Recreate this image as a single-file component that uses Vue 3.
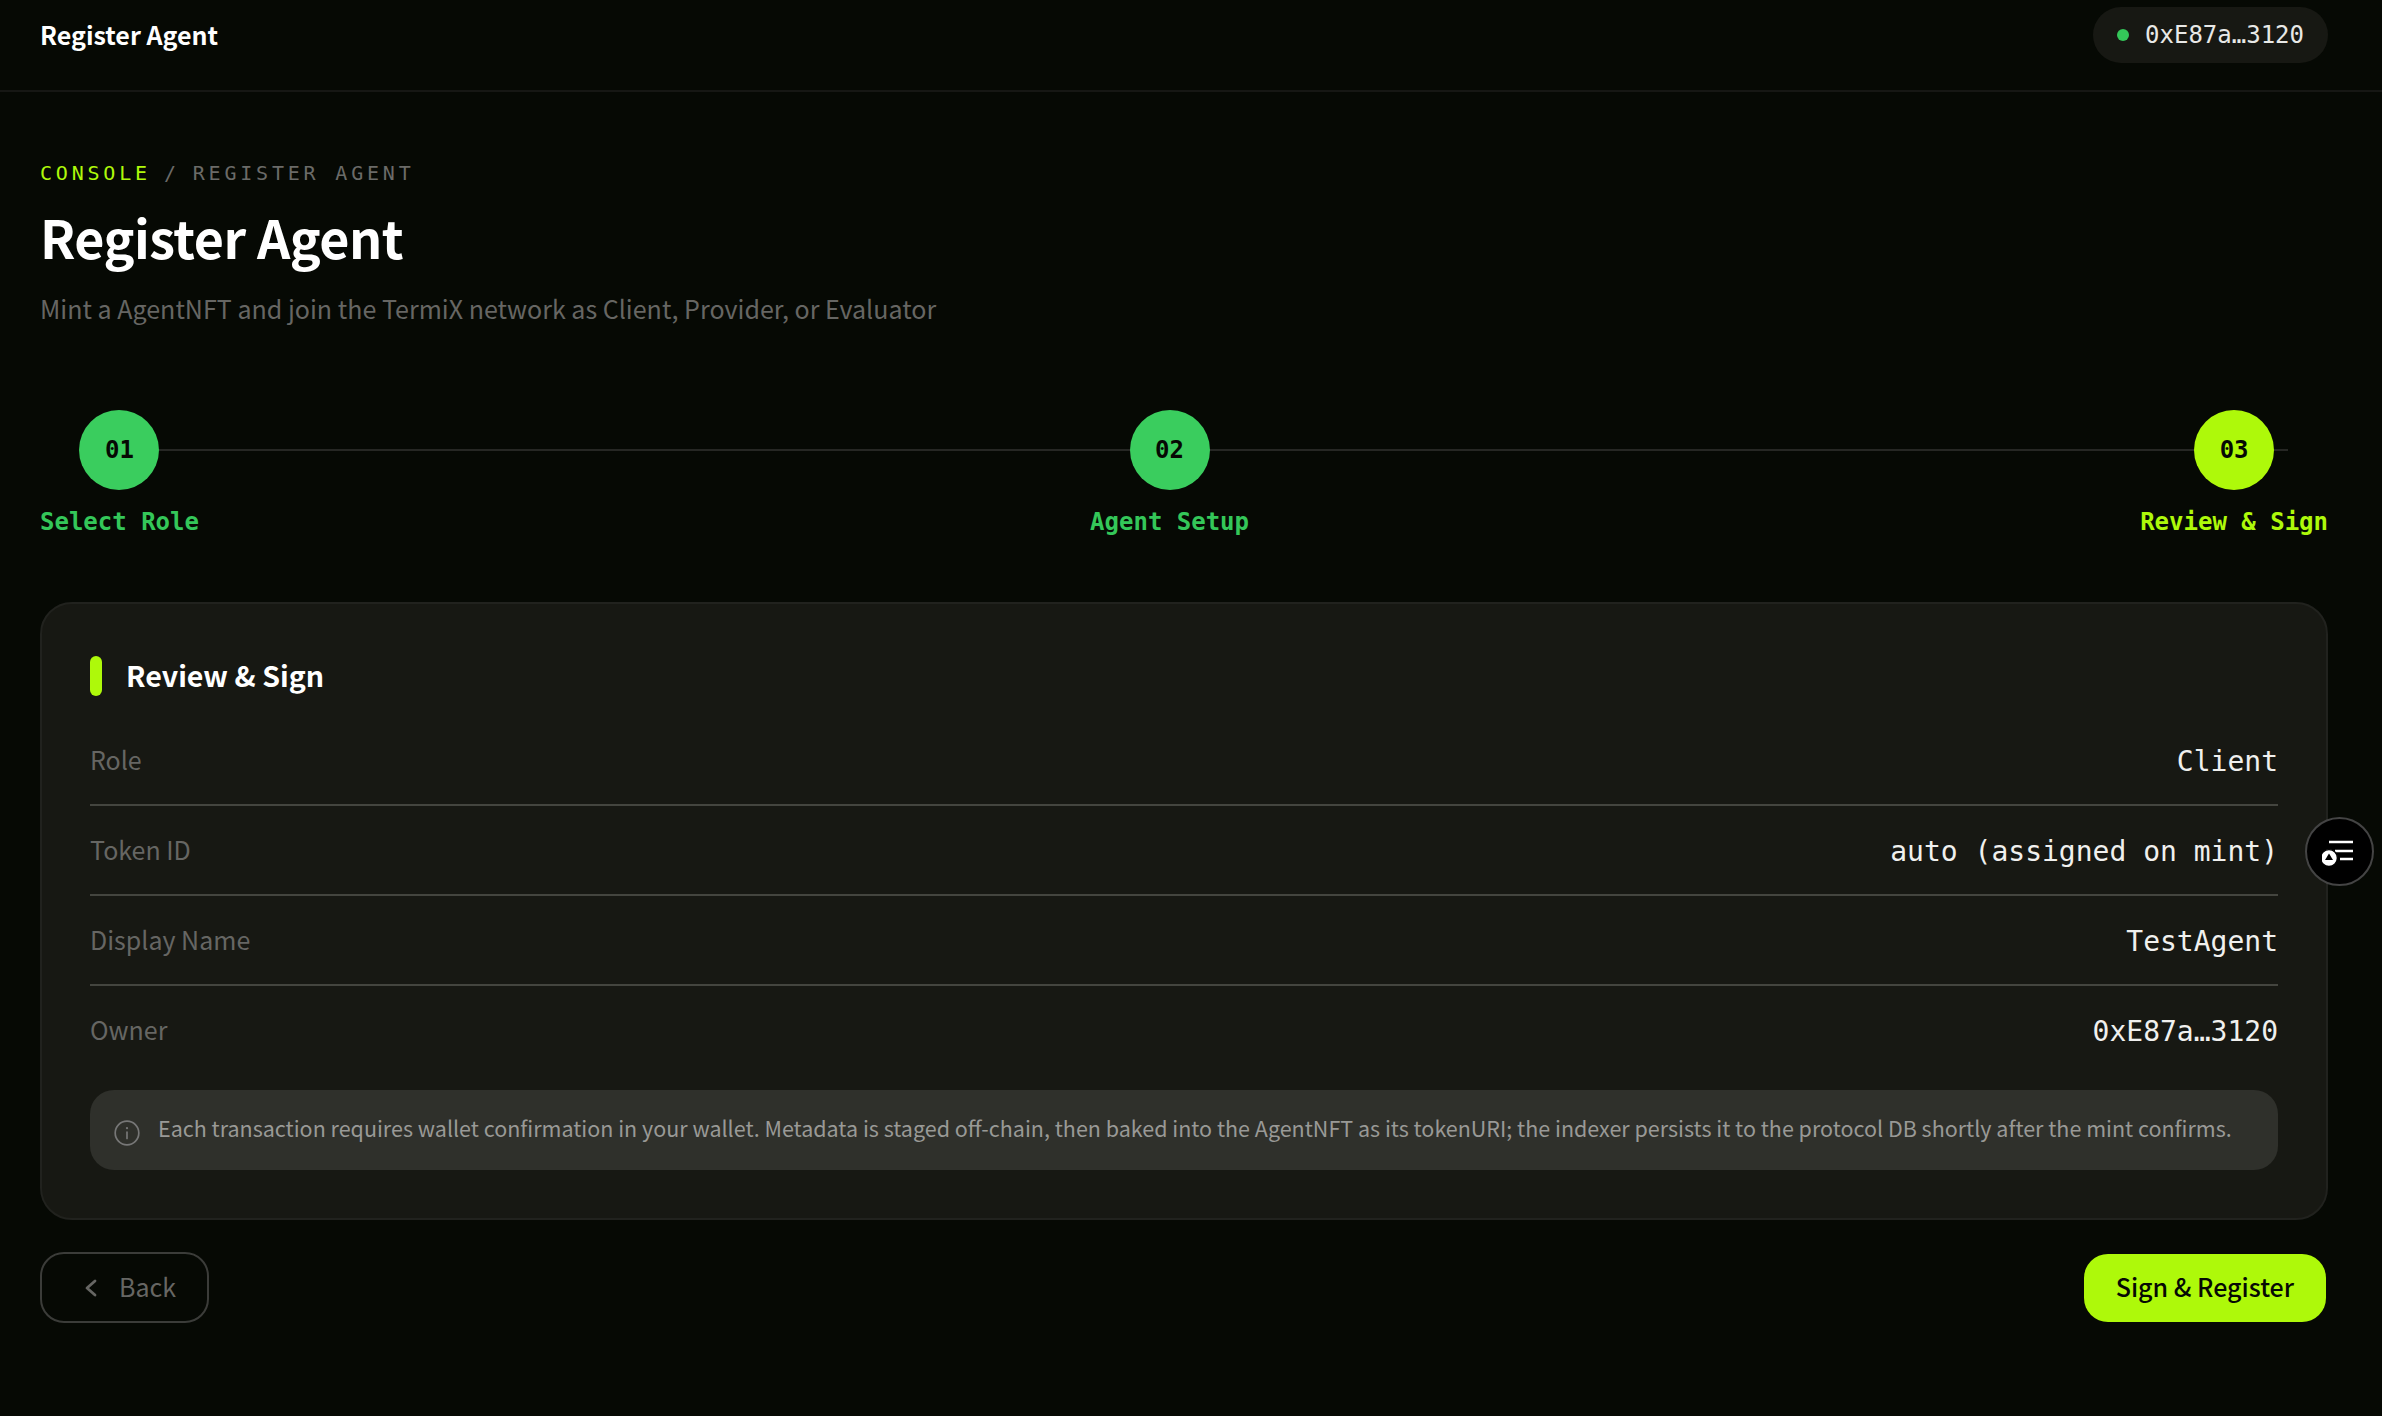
<script setup>
const steps = [
  { num: '01', label: 'Select Role', state: 'done' },
  { num: '02', label: 'Agent Setup', state: 'done' },
  { num: '03', label: 'Review & Sign', state: 'active' },
]
const rows = [
  { key: 'Role', value: 'Client' },
  { key: 'Token ID', value: 'auto (assigned on mint)' },
  { key: 'Display Name', value: 'TestAgent' },
  { key: 'Owner', value: '0xE87a…3120' },
]
</script>

<template>
  <div class="page">
    <header class="topbar">
      <div class="topbar-title">Register Agent</div>
      <div class="wallet"><span class="wallet-dot"></span>0xE87a…3120</div>
    </header>
    <main class="main">
      <div class="crumbs"><span class="crumb-root">CONSOLE</span><span class="crumb-sep">/</span><span class="crumb-cur">REGISTER AGENT</span></div>
      <h1 class="title">Register Agent</h1>
      <p class="subtitle">Mint a AgentNFT and join the TermiX network as Client, Provider, or Evaluator</p>

      <div class="stepper">
        <div class="stepper-line"></div>
        <div v-for="s in steps" :key="s.num" class="step" :class="s.state">
          <div class="step-circle">{{ s.num }}</div>
          <div class="step-label">{{ s.label }}</div>
        </div>
      </div>

      <section class="card">
        <div class="card-head"><span class="accent"></span><h2 class="card-title">Review &amp; Sign</h2></div>
        <div class="rows">
          <div v-for="r in rows" :key="r.key" class="row">
            <span class="row-key">{{ r.key }}</span>
            <span class="row-value">{{ r.value }}</span>
          </div>
        </div>
        <div class="note">
          <svg class="note-icon" viewBox="0 0 26 26" fill="none" stroke="currentColor" stroke-width="1.7" stroke-linecap="round"><circle cx="13" cy="13" r="11.8"/><path d="M13 12v6.5"/><path d="M13 8v.2" stroke-width="2.2"/></svg>
          <span class="note-text">Each transaction requires wallet confirmation in your wallet. Metadata is staged off-chain, then baked into the AgentNFT as its tokenURI; the indexer persists it to the protocol DB shortly after the mint confirms.</span>
        </div>
      </section>

      <div class="actions">
        <button class="btn-back">
          <svg class="chev" viewBox="0 0 14 20" fill="none" stroke="currentColor" stroke-width="2.8" stroke-linecap="round" stroke-linejoin="round"><path d="M11 3 3 10l8 7"/></svg>
          Back
        </button>
        <button class="btn-sign">Sign &amp; Register</button>
      </div>
    </main>

    <button class="float-btn" aria-label="Activity">
      <svg viewBox="0 0 36 28" width="36" height="28" fill="none">
        <path d="M7 4h24M13 13h18M18 21h13" stroke="#fff" stroke-width="2.4"/>
        <circle cx="7" cy="20" r="8.4" fill="#fff" stroke="#000" stroke-width="1.4"/>
        <path d="M7 15.5 11 22H3z" fill="#000"/>
      </svg>
    </button>
  </div>
</template>

<style>
html, body { margin: 0; background: #060904; }
</style>

<style scoped>
.page {
  position: relative;
  min-height: 1416px;
  background: #060904;
  color: #fff;
  font-family: "Noto Sans CJK SC", "Noto Sans", sans-serif;
  overflow: hidden;
}
.topbar {
  display: flex;
  justify-content: space-between;
  align-items: flex-start;
  height: 83px;
  padding: 7px 54px 0 40px;
  border-bottom: 2px solid #161714;
}
.topbar-title {
  font-size: 25px;
  font-weight: 700;
  line-height: 54px;
}
.wallet {
  display: flex;
  align-items: center;
  gap: 16px;
  height: 56px;
  padding: 0 24px;
  border-radius: 28px;
  background: #171813;
  font-family: "DejaVu Sans Mono", monospace;
  font-size: 24px;
  color: #e8e8e6;
}
.wallet-dot { width: 12px; height: 12px; border-radius: 50%; background: #34c759; }
.main { padding: 67px 54px 0 40px; }
.crumbs {
  display: flex;
  gap: 13px;
  font-family: "DejaVu Sans Mono", monospace;
  font-size: 20px;
  line-height: 28px;
  letter-spacing: 3.8px;
  color: #6b6b68;
}
.crumb-root { color: #aef90a; }
.title {
  margin: 14px 0 0;
  font-size: 52px;
  line-height: 72px;
  font-weight: 700;
  letter-spacing: -0.5px;
}
.subtitle { margin: 15px 0 0; font-size: 25.05px; line-height: 40px; color: #666663; }
.stepper {
  position: relative;
  display: flex;
  justify-content: space-between;
  margin-top: 82px;
}
.stepper-line {
  position: absolute;
  left: 40px;
  right: 40px;
  top: 39px;
  height: 2px;
  background: #262724;
}
.step { position: relative; display: flex; flex-direction: column; align-items: center; gap: 16px; }
.step-circle {
  width: 80px;
  height: 80px;
  border-radius: 50%;
  display: flex;
  align-items: center;
  justify-content: center;
  font-family: "DejaVu Sans Mono", monospace;
  font-size: 24px;
  font-weight: 700;
  color: #060904;
}
.step-label {
  font-family: "DejaVu Sans Mono", monospace;
  font-size: 24px;
  font-weight: 700;
  line-height: 32px;
}
.step.done .step-circle { background: #3acd5e; }
.step.done .step-label { color: #34c759; }
.step.active .step-circle { background: #aef90a; }
.step.active .step-label { color: #aef90a; }
.card {
  margin-top: 64px;
  padding: 52px 48px 48px;
  border: 2px solid #21221e;
  border-radius: 32px;
  background: #171813;
}
.card-head { display: flex; align-items: center; gap: 24px; height: 40px; margin-bottom: 20px; }
.accent { width: 12px; height: 40px; border-radius: 6px; background: #aef90a; }
.card-title { margin: -2px 0 0; font-size: 28.6px; font-weight: 700; line-height: 40px; }
.row {
  display: flex;
  justify-content: space-between;
  align-items: center;
  height: 88px;
  border-bottom: 2px solid #44453f;
}
.row:last-child { border-bottom: none; }
.row-key { font-size: 25px; color: #666663; padding-bottom: 3px; }
.row-value { font-family: "DejaVu Sans Mono", monospace; font-size: 28px; color: #f0f0ee; padding-top: 2px; }
.note {
  display: flex;
  align-items: center;
  gap: 18px;
  height: 80px;
  margin-top: 16px;
  padding: 0 24px;
  border-radius: 24px;
  background: #2f302b;
  font-size: 21.5px;
  color: #999996;
  white-space: nowrap;
}
.note-text { margin-bottom: 5px; }
.note-icon { width: 26px; height: 26px; flex: none; color: #777; margin-top: 5px; }
.actions {
  display: flex;
  justify-content: space-between;
  align-items: center;
  margin-top: 32px;
}
button { font-family: inherit; cursor: pointer; }
.btn-back {
  display: flex;
  align-items: center;
  gap: 21px;
  height: 71px;
  padding: 0 31px 3px 42px;
  border: 2px solid #3b3c39;
  border-radius: 24px;
  background: transparent;
  color: #666663;
  font-size: 25px;
}
.chev { width: 14px; height: 20px; margin-top: 3px; }
.btn-sign {
  height: 68px;
  padding: 0 32px 3px;
  margin-right: 2px;
  border: none;
  border-radius: 24px;
  background: #aef90a;
  color: #060904;
  font-size: 25px;
  font-weight: 500;
}
.float-btn {
  position: absolute;
  left: 2305px;
  top: 817px;
  width: 69px;
  height: 69px;
  display: flex;
  align-items: center;
  justify-content: center;
  padding: 0;
  border: 2px solid #444;
  border-radius: 50%;
  background: #000;
}
</style>
